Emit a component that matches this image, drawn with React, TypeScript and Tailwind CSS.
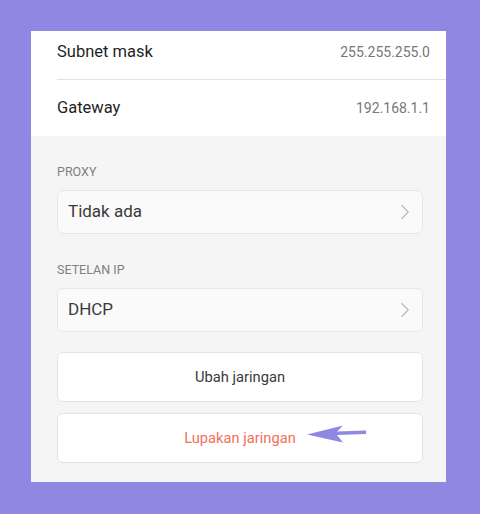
import { ChevronRight } from "lucide-react";

const font = { fontFamily: "Roboto, 'Noto Sans', sans-serif" };

function InfoRow({ label, value, className }: { label: string; value: string; className: string }) {
  return (
    <div className={`flex items-center justify-between pl-[26px] pr-4 ${className}`}>
      <span className="text-[16.5px] text-[#1f1f1f]">{label}</span>
      <span className="text-[14px] text-[#777]">{value}</span>
    </div>
  );
}

function Picker({ title, value }: { title: string; value: string }) {
  return (
    <div>
      <div className="text-[12.5px] leading-[15px] uppercase text-[#808080]">{title}</div>
      <button className="mt-[11px] flex h-[44px] w-full items-center justify-between rounded-[6px] border border-[#e6e6e6] bg-[#fafafa] pl-[10px] pr-[4px] text-left">
        <span className="text-[17px] text-[#3a3a3a]">{value}</span>
        <ChevronRight className="size-[26px] text-[#b8b8b8]" strokeWidth={1} />
      </button>
    </div>
  );
}

export default function App() {
  return (
    <div className="flex h-[514px] w-[480px] bg-[#8e88e3] pl-[31px] pt-[31px]" style={font}>
      <div className="flex h-[451px] w-[415px] flex-col overflow-hidden bg-[#f5f5f5]">
        <div className="bg-white">
          <InfoRow label="Subnet mask" value="255.255.255.0" className="h-[48px] pb-[6px]" />
          <div className="ml-[26px] h-px bg-[#e2e2e2]" />
          <InfoRow label="Gateway" value="192.168.1.1" className="h-[56px]" />
        </div>
        <div className="flex flex-col pl-[26px] pr-[23px] pt-[28px]">
          <Picker title="Proxy" value="Tidak ada" />
          <div className="mt-[28px]">
            <Picker title="Setelan IP" value="DHCP" />
          </div>
          <button className="mt-[20px] h-[50px] rounded-[6px] border border-[#e3e3e3] bg-white text-[14.7px] text-[#3a3a3a]">
            Ubah jaringan
          </button>
          <button className="relative mt-[11px] h-[50px] rounded-[6px] border border-[#e3e3e3] bg-white text-[14.7px] text-[#f2705a]">
            Lupakan jaringan
            {/* pointer arrow */}
            <svg className="absolute left-[248px] top-[10px]" width="62" height="20" viewBox="0 0 62 20">
              <path d="M1 10.5 L37 1.5 L31 7.5 L60 6.5 L60 10 L31 11 L37 18.5 Z" fill="#8e88e3" />
            </svg>
          </button>
        </div>
      </div>
    </div>
  );
}
